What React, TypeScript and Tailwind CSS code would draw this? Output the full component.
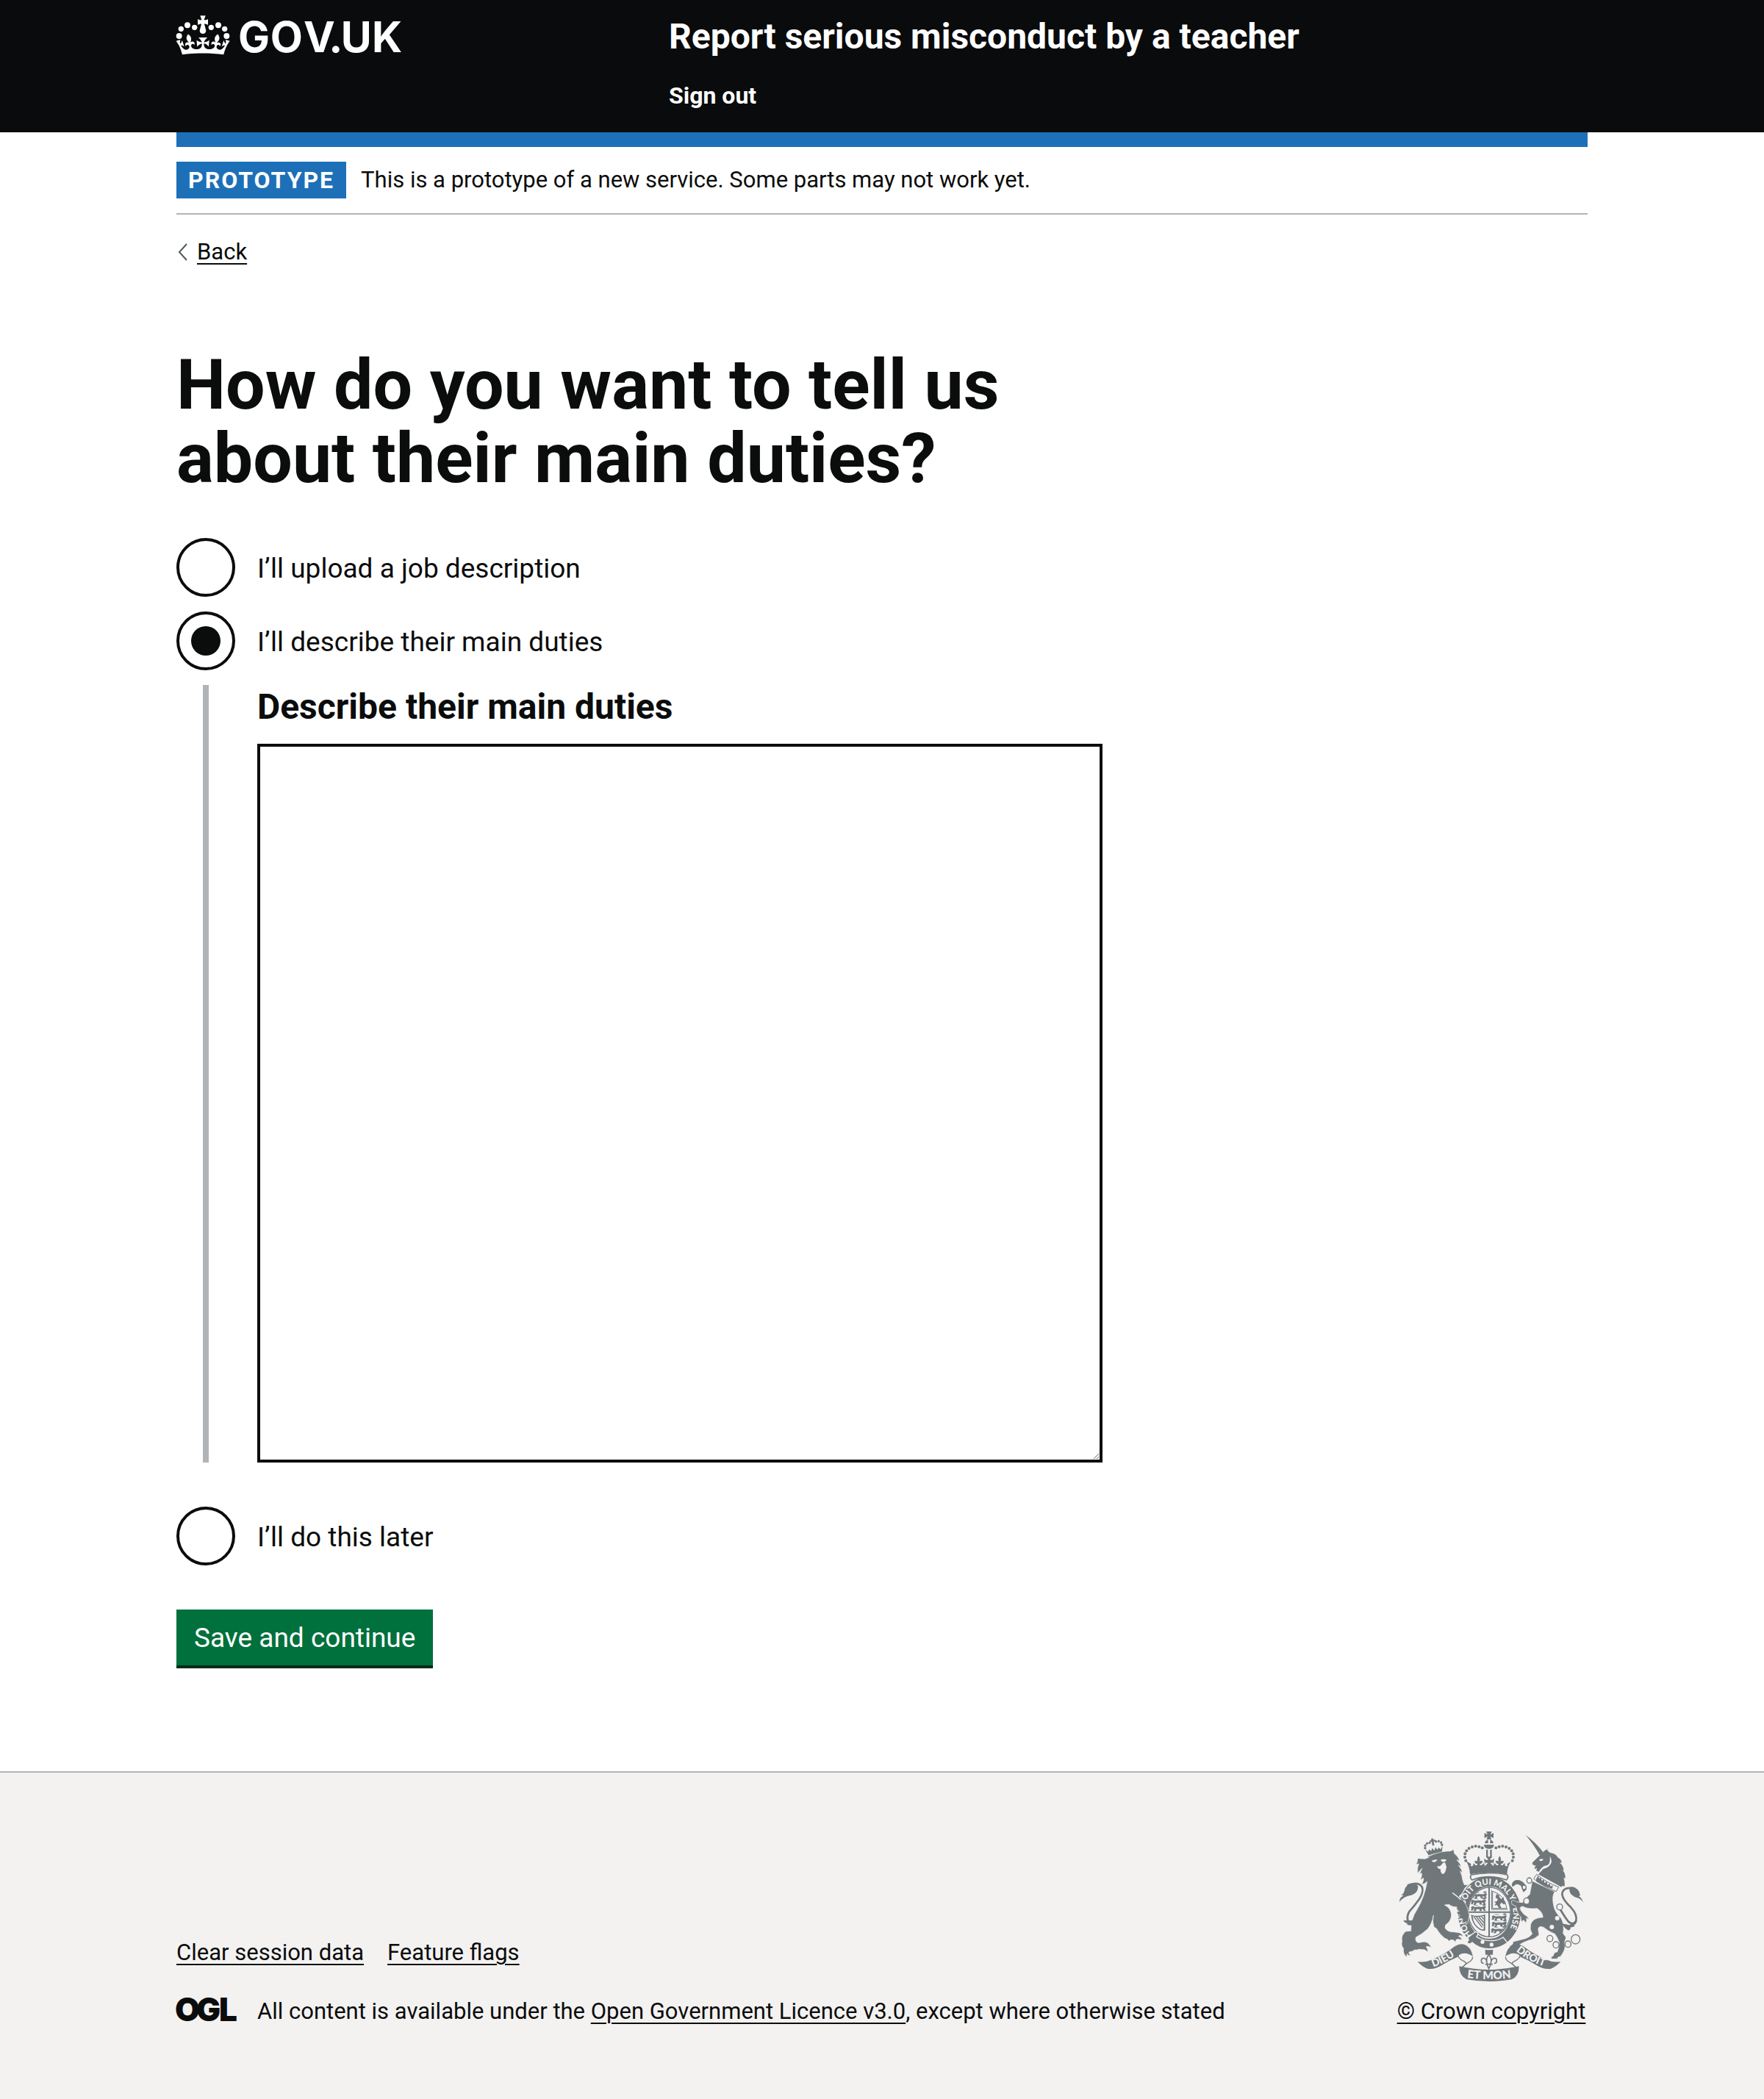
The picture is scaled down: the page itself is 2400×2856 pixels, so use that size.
import React, { useState } from 'react';

const BEADS_LEFT: [number, number, number][] = [
  [71, 147, 12],
  [79, 118, 11],
  [105, 103, 12],
  [134, 112, 11],
];

function GovUkLogo() {
  return (
    <svg viewBox="60 60 924 168" className="block h-14 w-[308px] overflow-visible" role="img" aria-label="GOV.UK" fill="#fff">
      {BEADS_LEFT.map(([x, y, r]) => (
        <g key={x}>
          <circle cx={x} cy={y} r={r} />
          <circle cx={336 - x} cy={y} r={r} />
        </g>
      ))}
      <path d="M157 64h22l-6 17c5 2 10 0 16-3v24c-6-3-11-5-15-4l6 23c3 9-3 17-12 17s-15-8-12-17l6-23c-4-1-9 1-15 4V78c6 3 11 5 16 3z" />
      <path
        transform="translate(168 153) scale(3.45 3.15) translate(-31.7 -37.9)"
        d="M37,37.9s-3.4,3.8-4.1,6.1c2.2,0,4.2-.5,6.4-2.8l-.7,8.5c-2-2.8-4.4-4.1-5.7-3.8.1,3.1.5,6.7,5.8,7.2,3.7.3,6.7-1.5,7-3.8.4-2.6-2-4.3-3.7-1.6-1.4-4.5,2.4-6.1,4.9-3.2-1.9-4.5-1.8-7.7,2.4-10.9,3,4,2.6,7.3-1.2,11.1,2.4-1.3,6.2,0,4,4.6-1.2-2.8-3.7-2.2-4.2.2-.3,1.7.7,3.7,3,4.2,1.9.3,4.7-.9,7-5.9-1.3,0-2.4.7-3.9,1.7l2.4-8c.6,2.3,1.4,3.7,2.2,4.5.6-1.6.5-2.8,0-5.3l5,1.8c-2.6,3.6-5.2,8.7-7.3,17.5-7.4-1.1-15.7-1.7-24.5-1.7h0c-8.8,0-17.1.6-24.5,1.7-2.1-8.9-4.7-13.9-7.3-17.5l5-1.8c-.5,2.5-.6,3.7,0,5.3.8-.8,1.6-2.3,2.2-4.5l2.4,8c-1.5-1-2.6-1.7-3.9-1.7,2.3,5,5.2,6.2,7,5.9,2.3-.4,3.3-2.4,3-4.2-.5-2.4-3-3.1-4.2-.2-2.2-4.6,1.6-6,4-4.6-3.7-3.7-4.2-7.1-1.2-11.1,4.2,3.2,4.3,6.4,2.4,10.9,2.5-2.8,6.3-1.3,4.9,3.2-1.8-2.7-4.1-1-3.7,1.6.3,2.3,3.3,4.1,7,3.8,5.4-.5,5.7-4.2,5.8-7.2-1.3-.2-3.7,1-5.7,3.8l-.7-8.5c2.2,2.3,4.2,2.7,6.4,2.8-.7-2.3-4.1-6.1-4.1-6.1h10.6Z"
      />
      <text x="312 443 579 682 731 858" y="213" fontFamily="Inter, sans-serif" fontWeight="700" fontSize="172">
        GOV.UK
      </text>
    </svg>
  );
}

function OglLogo() {
  return (
    <svg viewBox="0 0 82 34" className="block h-[34px] w-[82px] shrink-0 overflow-visible" role="img" aria-label="Open Government Licence" fill="#0b0c0c">
      <text x="-2 27 58" y="33" fontFamily="Inter, sans-serif" fontWeight="900" fontSize="44">
        OGL
      </text>
    </svg>
  );
}

const CROWN_BEADS: [number, number][] = [
  [350, 79], [337, 74], [323, 72], [309, 75], [296, 81], [286, 91], [280, 103], [279, 117], [283, 131],
];

const CHAIN: [number, number, number][] = [
  [542, 212, 10], [531, 296, 12], [521, 240, 8], [626, 449, 12], [651, 475, 12], [700, 472, 12], [731, 452, 18],
];

/* A passant lion, three of which fill an English quarter. */
function SmallLion({ x, y }: { x: number; y: number }) {
  return (
    <path
      transform={`translate(${x} ${y})`}
      d="M4 6q6-6 10 0l6 1q14-3 26 0l8-3q8-6 8 4l-4 6 4 8h-7l-3-7-8-1 2 8h-8l-2-8-12 1-3 8h-8l4-9-5-2-2 8H2l3-9q-5-1-1-5zM48-3q8-6 14 1l-4 2-8 0zM12-3q10 4 20 2"
      strokeWidth="1"
    />
  );
}

function SmallCrown() {
  return (
    <g transform="translate(153 82) rotate(-11)">
      <path d="M-36-4l10 12 7-9 6 9 6-12 7 12 7-12 6 12 6-9 7 9 10-12-7 26q-27-5-56 0z" />
      <path d="M-29 26q29-6 58 0l1 6q-30-7-60 0z" />
      {[[-35, -9], [-33, -19], [-24, -26], [-13, -27], [35, -9], [33, -19], [24, -26], [13, -27]].map(([x, y]) => (
        <circle key={`${x}${y}`} cx={x} cy={y} r="5" />
      ))}
      <path d="M-4-42h8v6h7v7H4v16h-8v-16h-7v-7h7z" />
    </g>
  );
}

function Ribbon({ flip }: { flip?: boolean }) {
  return (
    <g transform={flip ? 'translate(756 0) scale(-1 1)' : undefined}>
      <path d="M86 543q30 6 60-8 48-20 92-54 22-14 42-6 24 9 32 48-22-18-46-12-12 3-18 14-34 14-62 32-32 20-60 15-22-8-40-29z" />
      <path
        d="M251 512q-2 18 24 30 18 8-2 20-8 5-8 14M311 524q0 14-20 24-14 8-20 18"
        fill="none"
        stroke="#6f777b"
        strokeWidth="4"
      />
    </g>
  );
}

function RoyalArms() {
  return (
    <svg viewBox="12 12 750 612" className="block h-[204px] w-[250px] overflow-visible" aria-hidden="true" fill="#6f777b" stroke="none">
      {/* Crown */}
      <path d="M366 12h23l-6 13 13-7v21l-13-7 5 12h-21l5-12-13 7V18l13 7zM374 46v14h-14q2-12 14-14zM382 46q12 2 14 14h-14zM356 66h43l-5 12q-16 10-33 0z" />
      <path d="M366 86h7v32h-7zM382 86h7v32h-7z" />
      {CROWN_BEADS.map(([x, y]) => (
        <g key={x + y}>
          <circle cx={x} cy={y} r="6" />
          <circle cx={756 - x} cy={y} r="6" />
        </g>
      ))}
      <path d="M290 136l15 9-3 7q7 4 11-1l1-10 10 10q6-2 7-7-10 0-13-10 8-6 13 1-4-12 4-23 8 11 4 23 6-7 13-1-3 10-13 10 2 6 7 7l10-10 5 12 12-12-10-2-2 8-4-25 9 7 9-2-10-12h26l-10 12 9 2 9-7-4 25-2-8-10 2 12 12 5-12 10 10q5-1 7-7-10 0-13-10 7-6 13 1-4-12 4-23 8 11 4 23 5-7 13-1-3 10-13 10 1 5 7 7l10-10 1 10q4 5 11 1l-3-7 15-9q-14 22-15 51-77-16-151 0-1-29-14-51z" />
      <path d="M305 189q-8 10 3 21 70-26 141 0 10-11 3-21-74-16-147 0z" fill="none" stroke="#6f777b" strokeWidth="5" />

      {/* Garter and shield */}
      <clipPath id="shield">
        <ellipse cx="379" cy="341" rx="84" ry="99" />
      </clipPath>
      <ellipse cx="379" cy="343" rx="108" ry="127" fill="none" stroke="#6f777b" strokeWidth="40" />
      <ellipse cx="379" cy="341" rx="86" ry="101" fill="#f3f2f1" stroke="#6f777b" strokeWidth="4" />
      <path d="M375 238h6v206h-6zM291 338h176v6H291z" />
      <g clipPath="url(#shield)">
        <g stroke="#6f777b">
          <SmallLion x={306} y={262} />
          <SmallLion x={302} y={288} />
          <SmallLion x={302} y={314} />
          <SmallLion x={387} y={352} />
          <SmallLion x={387} y={378} />
          <SmallLion x={384} y={404} />
        </g>
        <path d="M388 251v79h66M392 256q50 14 58 70h-58z" fill="none" stroke="#6f777b" strokeWidth="3" />
        <path d="M408 268l10 2 2 10 8 8 10-8v14l8 12-8 4-10-8-6 10 6 12-8 2-10-14-10 2 6-10-8-4 12-4 4-8-10-6z" />
        <path d="M304 352q26 10 58-2v66q-14 4-24-4-30-18-34-60zM311 358q3 36 30 50 8 6 15 2v-54q-22 8-45 2z" fillRule="evenodd" />
        <path d="M316 360l34 44M326 360l28 36M336 360l20 24M346 358l10 12" fill="none" stroke="#6f777b" strokeWidth="4" />
      </g>
      <path id="motto-start" d="M308 436A101 119 0 0 1 280 318" fill="none" />
      <path id="motto" d="M279 312A101 119 0 1 1 430 448" fill="none" />
      <g fontFamily="Lato, sans-serif" fontWeight="900" fontSize="34" fill="#f3f2f1">
        <text>
          <textPath href="#motto-start">HONI</textPath>
        </text>
        <text>
          <textPath href="#motto">SOIT QUI MAL Y PENSE</textPath>
        </text>
      </g>
      <path d="M303 436l18-14q10-2 12 8l-6 12q24 16 58 16 30 0 50-14l18 22q-34 24-70 25-44 2-74-26-10 10-19 2-4-6 5-12-7-6-1-12z" stroke="#f3f2f1" strokeWidth="4" />
      <circle cx="351" cy="463" r="8" fill="#f3f2f1" />
      <circle cx="388" cy="474" r="8" fill="#f3f2f1" />

      {/* Lion */}
      <SmallCrown />
      <path
        d="M110 124l16-6 5-7q42-20 84-19l12-7 3 17q16 12 22 30l-12-4q14 14 19 28l-12-6q14 16 17 32l-10-8q8 18 9 32 3 14 8 24l16-1-14 14-10 20-14 14q34 26 42 76l-4 22q-2 14-10 19l2-14-12 7q-8-10-3-18-14 0-16-9l6-6q-14-4-14-14l10-2q-14-6-10-18-20 1-32-10l-18 2q26 12 28 40 0 26-24 42l-2 12q12 18 36 16l12 2q20 0 27 18-14-10-20-2 12 2 14 16-16-8-24-2l-2 10q-8-12-20-10l-6 6q-6-10-18-12-22-18-34-40l-10-6q-8-24-2-48-6 34-24 56-22 20-48 34-4 18 10 22l14-2q24-8 40 22-14-8-22-4 8 10 6 22-10-12-22-10-14-4-24 2-8-4-14 4l-16 4q-2 10 10 14-14 2-18-6-2 8 0 14-18-14-14-36-12-12-6-30-6-22 14-40l22-2q-2-46 24-86 32-52 42-116-8 10-22 12 8-14 8-26l-14 8q8-14 6-28l-8 4q4-14 10-24-10 8-18 22-4-24 4-40l-12 2 6-10 1-14z"
        transform="translate(6 0)"
        stroke="#f3f2f1"
        strokeWidth="2"
      />
      <path d="M143 131q12-4 25-4-8 12-18 10zM179 128q14-6 26 0-8 10-18 8zM166 152q10 6 18-4 2-8 14-10l6 18q-4 28-14 30-12-4-10-20-12 0-14-14z" fill="#f3f2f1" />
      <path d="M228 262q20 14 34 28" fill="none" stroke="#f3f2f1" strokeWidth="4" />
      <path d="M45 232q46-18 60 8 6 20-12 48-20 28-42 52-16 34 8 50l16-6" fill="none" stroke="#6f777b" strokeWidth="8" />
      <path d="M12 300q0-20 18-26l-10-2q10-6 12-16 4-32 34-32 24 2 22 16-2 24-28 32-34 6-48 28zM28 374q20 2 42 0l22-12q-10 28-36 33-12 0-14-4l6-2q-16-4-20-15z" />

      {/* Unicorn */}
      <path d="M527 26q44 32 76 76l-18 8q-24-44-58-84z" />
      <path d="M612 84q8 10 14 14 26 4 32 20 16 8 16 22l-8-2q18 18 16 34l-6-4q16 16 12 36l-6-4q6 18 4 36l-10-3-2 6-95-52 20-22q26-6 29-28-8 14-26 16-14 10-22 24l-10-6 4-10-10 4q-2-8 6-14-10 2-16-6l2-8 38-36q14-18 34-20z" />
      <path d="M582 127q10-6 18-2-4 8-14 8zM626 114q4 30-16 46 18-6 22-22 2-14-6-24z" fill="#f3f2f1" />
      <path
        d="M554 214l92 44q-12 16-6 50 4 32 32 58 14 26 8 62l12 16-6 20 2 20q-4 18-10 26l-10 14q-8-4-12 8h-24q-2-10 8-12 2-16 16-16 8-18 8-40-8-22-18-34-28-12-44-26-20-10-24 6l4 24q-18 18-42 22-30 10-42 22l-28 8-10-4 14-10 2-10q30-8 48-12 20-6 30-20-12-20-6-40 8-26 50-28-2-22-24-36-40 4-58-8-14 0-12 12l16 20q18 8 20 22l-10-6q4 10-4 20-2-12-10-12l-2 6q-8-2-6-18-12-10-16-28-2-16-10-20l-10-4q-4-8-2-16h12l10 6 24 2q12-20 28-34z"
        stroke="#f3f2f1"
        strokeWidth="2"
      />
      <path d="M470 230q4-18 20-20 18-2 32 14 10 14 8 26l-12 10q-6-14-10-26-12-8-20-6l-14 10z" />
      <path d="M572 187q40 34 90 52l-10 18q-50-18-92-52z" fill="#f3f2f1" stroke="#6f777b" strokeWidth="3" />
      <path d="M570 206l8-14 4 12 8-4 2 14 10-6 2 14 10-6 2 14 10-6 2 12 10-4-2 14q-38-12-66-30z" />
      <path d="M728 244q-50-8-52 24 2 22 36 54 28 30 20 56-12 20-32 0-16-20-42-66" fill="none" stroke="#6f777b" strokeWidth="8" />
      <path d="M762 304q-8-18-26-22-26-8-30-28-2-14 10-16 28 4 34 34l-6 4q14 8 18 28zM738 374q-4 18-14 20l4 2q-4 8-16 6-2 12-10 14-18-8-26-28l30 6z" />
      {CHAIN.map(([x, y, r]) => (
        <ellipse key={`${x}-${y}`} cx={x} cy={y} rx={r} ry={r + 1} fill="#f3f2f1" stroke="#6f777b" strokeWidth="4" />
      ))}
      <circle cx="666" cy="320" r="12" fill="#f3f2f1" stroke="#6f777b" strokeWidth="4" />
      <circle cx="656" cy="366" r="9" fill="#f3f2f1" />
      <circle cx="634" cy="402" r="9" fill="#f3f2f1" />

      {/* Badge and motto scroll */}
      <path d="M362 494q16 4 32 0l-1 21h-30z" />
      <path
        d="M377 514q-16 22-6 40h12q10-18-6-40zM370 544q-8-22-22-12-6 18 8 18M385 544q8-22 22-12 6 18-8 18M362 554h31M370 556l7 16 7-16"
        fill="none"
        stroke="#6f777b"
        strokeWidth="5"
      />
      <Ribbon />
      <Ribbon flip />
      <path d="M256 562q122 28 244 0 0 42-30 54-92 16-184 0-30-14-30-54z" />
      <path id="scroll-left" d="M150 565q56-18 116-66" fill="none" />
      <path id="scroll-right" d="M488 500q54 46 132 68" fill="none" />
      <path id="scroll-mid" d="M288 609q90 12 184 0" fill="none" />
      <g fontFamily="Lato, sans-serif" fontWeight="900" fill="#f3f2f1">
        <text fontSize="42">
          <textPath href="#scroll-left">DIEU</textPath>
        </text>
        <text fontSize="42">
          <textPath href="#scroll-right">DROIT</textPath>
        </text>
        <text fontSize="46">
          <textPath href="#scroll-mid">ET MON</textPath>
        </text>
      </g>
    </svg>
  );
}

const LINK = 'underline decoration-2 underline-offset-[5px]';

function RadioItem({
  id,
  label,
  checked,
  onSelect,
}: {
  id: string;
  label: string;
  checked: boolean;
  onSelect: () => void;
}) {
  return (
    <div className="flex items-center gap-[30px]">
      <span className="grid size-20 shrink-0">
        <input
          type="radio"
          id={id}
          name="duties"
          checked={checked}
          onChange={onSelect}
          className="peer col-start-1 row-start-1 size-20 appearance-none rounded-full border-4 border-[#0b0c0c] bg-white"
        />
        <span className="pointer-events-none col-start-1 row-start-1 hidden size-10 place-self-center rounded-full bg-[#0b0c0c] peer-checked:block" />
      </span>
      <label htmlFor={id} className="pt-1 text-[37px] leading-[50px]">
        {label}
      </label>
    </div>
  );
}

export default function App() {
  const [choice, setChoice] = useState('describe');

  return (
    <div className="flex min-h-screen flex-col bg-white font-['Roboto',sans-serif] text-[#0b0c0c]">
      <header className="bg-[#0a0b0c] px-60 text-white">
        <div className="flex pt-5 pb-[30px]">
          <div className="w-1/3">
            <a href="#" className="inline-block">
              <GovUkLogo />
            </a>
          </div>
          <div className="w-2/3 pl-[30px] font-bold">
            <a href="#" className="block text-[48px] leading-[60px]">
              Report serious misconduct by a teacher
            </a>
            <nav className="mt-[30px] text-[32px] leading-10">
              <a href="#">Sign out</a>
            </nav>
          </div>
        </div>
      </header>

      <div className="grow px-60 pb-[138px]">
        <div className="h-5 bg-[#1d70b8]" />
        <div className="flex items-center gap-5 border-b-2 border-[#b1b4b6] py-5">
          <strong className="bg-[#1d70b8] px-4 text-[32px] leading-[50px] tracking-[2px] text-white">PROTOTYPE</strong>
          <span className="text-[31px] leading-[50px]">
            This is a prototype of a new service. Some parts may not work yet.
          </span>
        </div>
        <div className="mt-[31px] flex items-center gap-3">
          <svg viewBox="0 0 16 24" className="h-6 w-4" fill="none" stroke="#505a5f" strokeWidth="2" aria-hidden="true">
            <path d="M14 1L4 12l10 11" />
          </svg>
          <a href="#" className={`${LINK} text-[31px] leading-10`}>
            Back
          </a>
        </div>

        <main className="mt-[111px] grid grid-cols-3 gap-[60px]">
          <form className="col-span-2" onSubmit={(e) => e.preventDefault()}>
            <fieldset>
              <legend>
                <h1 className="text-[95px] leading-[100px] font-bold">How do you want to tell us about their main duties?</h1>
              </legend>
              <div className="mt-[58px] flex flex-col gap-5">
                <RadioItem
                  id="upload"
                  label="I’ll upload a job description"
                  checked={choice === 'upload'}
                  onSelect={() => setChoice('upload')}
                />
                <RadioItem
                  id="describe"
                  label="I’ll describe their main duties"
                  checked={choice === 'describe'}
                  onSelect={() => setChoice('describe')}
                />
                {choice === 'describe' && (
                  <div className="mb-10 ml-9 border-l-8 border-[#b1b4b6] pl-[66px]">
                    <label htmlFor="duties-text" className="block text-[48px] leading-[60px] font-bold">
                      Describe their main duties
                    </label>
                    <textarea
                      id="duties-text"
                      className="mt-5 block h-[978px] w-full resize-y border-4 border-[#0b0c0c] p-2 text-[37px] leading-[50px]"
                    />
                  </div>
                )}
                <RadioItem
                  id="later"
                  label="I’ll do this later"
                  checked={choice === 'later'}
                  onSelect={() => setChoice('later')}
                />
              </div>
            </fieldset>
            <button
              type="submit"
              className="mt-[60px] mb-1 block bg-[#00703c] px-6 pt-3.5 pb-3 text-[37px] leading-[50px] text-white shadow-[0_4px_0_#002d18]"
            >
              Save and continue
            </button>
          </form>
        </main>
      </div>

      <footer className="flex items-end justify-between border-t-2 border-[#b1b4b6] bg-[#f3f2f1] px-60 pt-20 pb-[99px] text-[31px] leading-10">
        <div className="flex flex-col gap-10">
          <div className="flex gap-8">
            <a href="#" className={LINK}>
              Clear session data
            </a>
            <a href="#" className={LINK}>
              Feature flags
            </a>
          </div>
          <div className="flex items-start gap-7">
            <OglLogo />
            <span>
              All content is available under the{' '}
              <a href="#" className={LINK}>
                Open Government Licence v3.0
              </a>
              , except where otherwise stated
            </span>
          </div>
        </div>
        <a href="#" className={`${LINK} flex w-[262px] flex-col items-center gap-[21px]`}>
          <RoyalArms />
          © Crown copyright
        </a>
      </footer>
    </div>
  );
}
